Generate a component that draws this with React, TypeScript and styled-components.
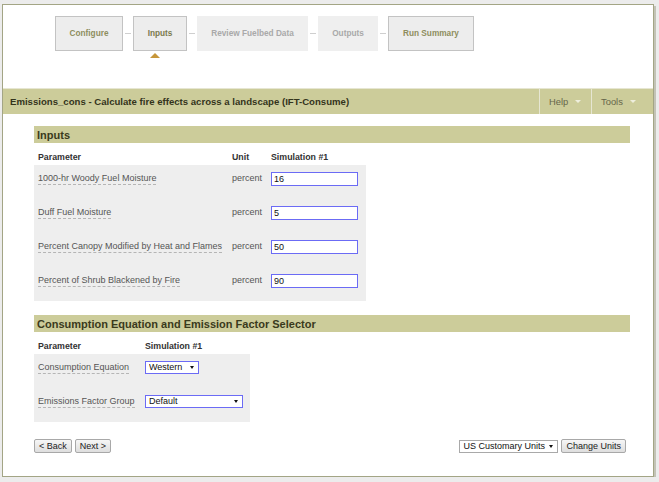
import React from "react";
import styled, { createGlobalStyle } from "styled-components";

const Global = createGlobalStyle`
  html, body { margin: 0; padding: 0; background: #ececec; }
  body { font-family: "Liberation Sans", Arial, sans-serif; }
  * { box-sizing: border-box; }
`;

const Frame = styled.div`
  margin: 4px 0 0 2px;
  width: 652px;
  height: 473px;
  background: #fff;
  border: 1px solid #a3a585;
  box-shadow: 2px 2px 0 #c3c3b6;
  display: flex;
  flex-direction: column;
`;

const Wizard = styled.div`
  display: flex;
  align-items: flex-start;
  padding: 11px 0 0 52px;
  height: 83px;
`;

const Step = styled.div<{ $state: "on" | "off" | "active"; $w: number }>`
  position: relative;
  width: ${(p) => p.$w}px;
  height: 35px;
  display: flex;
  align-items: center;
  justify-content: center;
  font-size: 8.25px;
  font-weight: bold;
  white-space: nowrap;
  background: ${(p) => (p.$state === "off" ? "#efefef" : "#ededed")};
  border: 1px solid ${(p) => (p.$state === "off" ? "#efefef" : "#c3c3c3")};
  color: ${(p) =>
    p.$state === "off" ? "#a9a9a9" : p.$state === "active" ? "#7a7a4e" : "#8e8e5e"};
`;

const Pointer = styled.span`
  position: absolute;
  left: 16px;
  top: 36px;
  width: 0;
  height: 0;
  border-left: 5px solid transparent;
  border-right: 5px solid transparent;
  border-bottom: 5px solid #c6963a;
`;

const Connector = styled.span`
  width: 6px;
  height: 1px;
  margin: 17px 2px 0;
  background: #cfcfcf;
`;

const TitleBar = styled.div`
  display: flex;
  height: 26px;
  background: #cccc9a;
  border-top: 1px solid #e6e6d2;
`;

const Title = styled.div`
  flex: 1;
  padding-left: 7px;
  display: flex;
  align-items: center;
  font-size: 9.6px;
  font-weight: bold;
  color: #34341c;
`;

const Menu = styled.div<{ $w: number }>`
  width: ${(p) => p.$w}px;
  border-left: 1px solid #e6e6d2;
  display: flex;
  align-items: center;
  padding-left: 9px;
  font-size: 9.4px;
  color: #66664a;
`;

const Caret = styled.span`
  margin-left: 7px;
  width: 0;
  height: 0;
  border-left: 3px solid transparent;
  border-right: 3px solid transparent;
  border-top: 3px solid #eeeedd;
`;

const Content = styled.div`
  padding: 12px 23px 0 31px;
  display: flex;
  flex-direction: column;
  flex: 1;
`;

const SectionHead = styled.div<{ $mt?: number }>`
  margin-top: ${(p) => p.$mt ?? 0}px;
  height: 17px;
  background: #cccc9a;
  padding-left: 3px;
  display: flex;
  align-items: center;
  font-size: 11px;
  font-weight: bold;
  color: #3a3a1c;
`;

const Table = styled.table<{ $w: number }>`
  margin-top: 5px;
  width: ${(p) => p.$w}px;
  border-collapse: collapse;
  table-layout: fixed;
`;

const Th = styled.th<{ $w: number }>`
  width: ${(p) => p.$w}px;
  height: 17px;
  padding: 0 4px;
  text-align: left;
  font-size: 8.8px;
  font-weight: bold;
  color: #333;
  background: #fff;
`;

const Td = styled.td`
  height: 34px;
  padding: 7px 4px 0;
  vertical-align: top;
  background: #eeeeee;
  font-size: 9px;
  line-height: 13px;
  color: #555;
  white-space: nowrap;
`;

const Label = styled.span`
  color: #555;
  border-bottom: 1px dashed #b5b5b5;
  padding-bottom: 1px;
`;

const TextInput = styled.input`
  display: block;
  width: 87px;
  height: 14px;
  padding: 0 2px;
  border: 1px solid #6b6bf5;
  font-family: "Liberation Sans", Arial, sans-serif;
  font-size: 9px;
  color: #111;
  background: #fff;
  outline: none;
`;

const SelectWrap = styled.span<{ $w: number }>`
  position: relative;
  display: inline-block;
  width: ${(p) => p.$w}px;
  height: 13px;
  vertical-align: top;
  &::after {
    content: "";
    position: absolute;
    right: 5px;
    top: 5px;
    border-left: 2.5px solid transparent;
    border-right: 2.5px solid transparent;
    border-top: 3.5px solid #111;
    pointer-events: none;
  }
`;

const Select = styled.select<{ $blue?: boolean }>`
  appearance: none;
  -webkit-appearance: none;
  display: block;
  width: 100%;
  height: 100%;
  padding: 0 0 0 3px;
  margin: 0;
  border: 1px solid ${(p) => (p.$blue ? "#6b6bf5" : "#a9a9a9")};
  border-radius: 0;
  background: #fff;
  font-family: "Liberation Sans", Arial, sans-serif;
  font-size: 9px;
  line-height: 11px;
  color: #111;
  outline: none;
`;

const Footer = styled.div`
  margin-top: 17px;
  margin-right: 4px;
  display: flex;
  align-items: center;
  gap: 3px;
`;

const Spacer = styled.div`
  flex: 1;
`;

const Button = styled.button`
  height: 14px;
  padding: 0 4px;
  border: 1px solid #a8a8a8;
  border-radius: 2px;
  background: linear-gradient(#f6f6f6, #dedede);
  font-family: "Liberation Sans", Arial, sans-serif;
  font-size: 9px;
  line-height: 12px;
  color: #222;
`;

const inputs = [
  ["1000-hr Woody Fuel Moisture", "16"],
  ["Duff Fuel Moisture", "5"],
  ["Percent Canopy Modified by Heat and Flames", "50"],
  ["Percent of Shrub Blackened by Fire", "90"],
];

export default function App() {
  return (
    <>
      <Global />
      <Frame>
        <Wizard>
          <Step $state="on" $w={68}>Configure</Step>
          <Connector />
          <Step $state="active" $w={54}>
            Inputs
            <Pointer />
          </Step>
          <Connector />
          <Step $state="off" $w={111}>Review Fuelbed Data</Step>
          <Connector />
          <Step $state="off" $w={60}>Outputs</Step>
          <Connector />
          <Step $state="on" $w={86}>Run Summary</Step>
        </Wizard>
        <TitleBar>
          <Title>Emissions_cons - Calculate fire effects across a landscape (IFT-Consume)</Title>
          <Menu $w={52}>
            Help
            <Caret />
          </Menu>
          <Menu $w={62}>
            Tools
            <Caret />
          </Menu>
        </TitleBar>
        <Content>
          <SectionHead>Inputs</SectionHead>
          <Table $w={332}>
            <thead>
              <tr>
                <Th $w={194}>Parameter</Th>
                <Th $w={39}>Unit</Th>
                <Th $w={99}>Simulation #1</Th>
              </tr>
            </thead>
            <tbody>
              {inputs.map(([label, value]) => (
                <tr key={label}>
                  <Td>
                    <Label>{label}</Label>
                  </Td>
                  <Td>percent</Td>
                  <Td>
                    <TextInput defaultValue={value} />
                  </Td>
                </tr>
              ))}
            </tbody>
          </Table>
          <SectionHead $mt={14}>Consumption Equation and Emission Factor Selector</SectionHead>
          <Table $w={216}>
            <thead>
              <tr>
                <Th $w={107}>Parameter</Th>
                <Th $w={109}>Simulation #1</Th>
              </tr>
            </thead>
            <tbody>
              <tr>
                <Td>
                  <Label>Consumption Equation</Label>
                </Td>
                <Td>
                  <SelectWrap $w={54}>
                    <Select $blue defaultValue="western">
                      <option value="western">Western</option>
                      <option value="eastern">Eastern</option>
                    </Select>
                  </SelectWrap>
                </Td>
              </tr>
              <tr>
                <Td>
                  <Label>Emissions Factor Group</Label>
                </Td>
                <Td>
                  <SelectWrap $w={98}>
                    <Select $blue defaultValue="default">
                      <option value="default">Default</option>
                    </Select>
                  </SelectWrap>
                </Td>
              </tr>
            </tbody>
          </Table>
          <Footer>
            <Button>&lt; Back</Button>
            <Button>Next &gt;</Button>
            <Spacer />
            <SelectWrap $w={99}>
              <Select defaultValue="us">
                <option value="us">US Customary Units</option>
                <option value="metric">Metric Units</option>
              </Select>
            </SelectWrap>
            <Button>Change Units</Button>
          </Footer>
        </Content>
      </Frame>
    </>
  );
}
